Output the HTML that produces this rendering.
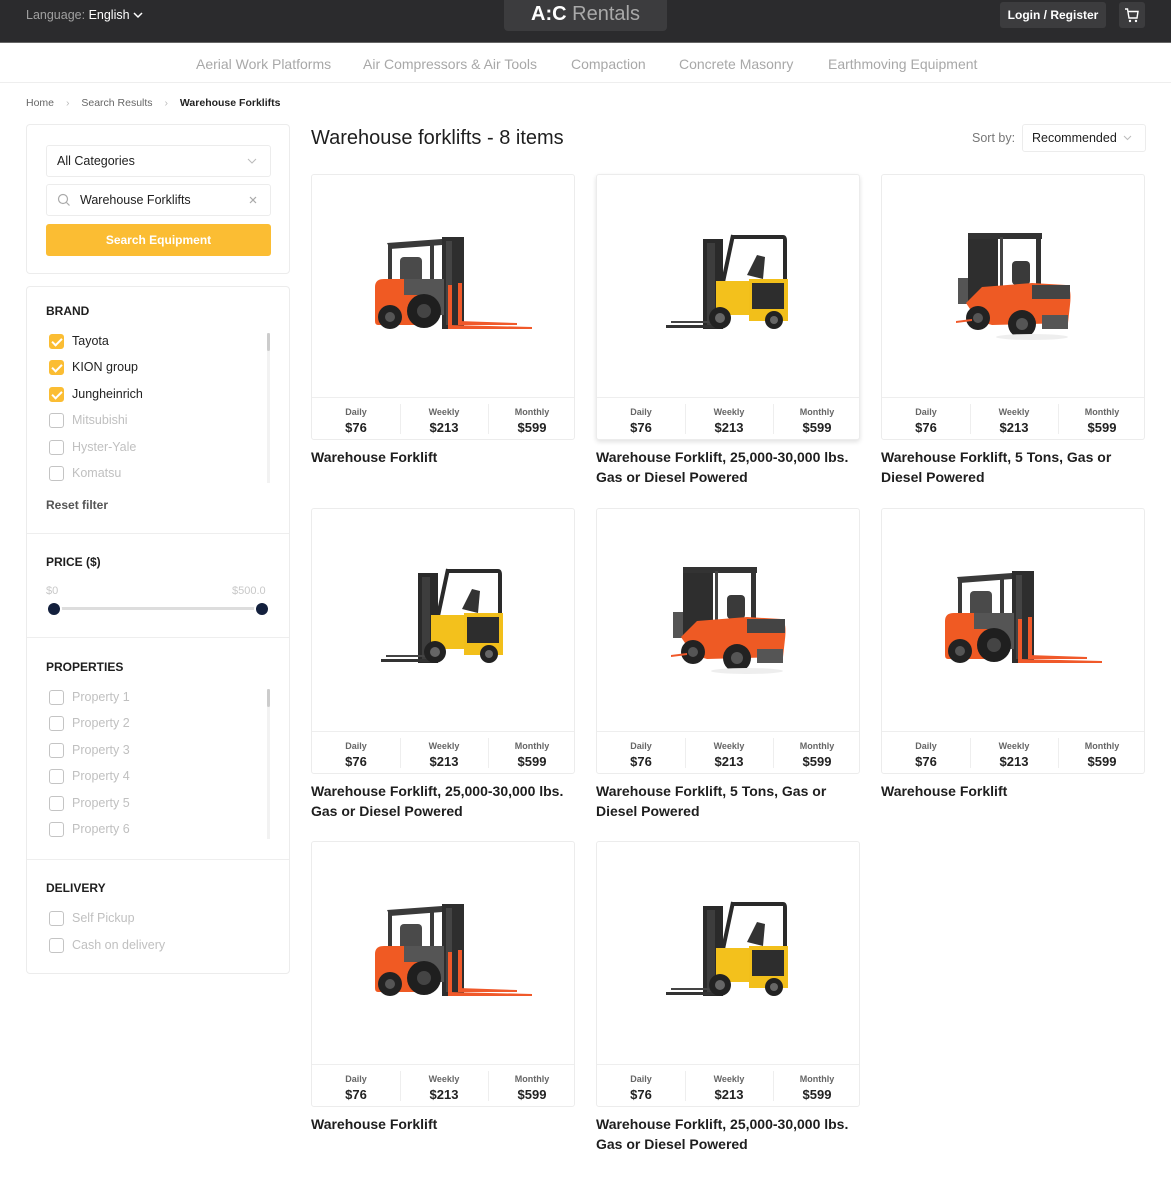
<!DOCTYPE html>
<html><head><meta charset="utf-8">
<style>
*{box-sizing:border-box;margin:0;padding:0}
body{width:1171px;height:1200px;background:#fff;font-family:"Liberation Sans",Arial,sans-serif;color:#1e1e1e;position:relative;overflow:hidden}
.abs{position:absolute}
.hdr{left:0;top:0;width:1171px;height:43px;background:#2b2b2d;border-bottom:1px solid #666}
.nav{top:44px;left:0;width:1171px;height:39px;border-bottom:1px solid #eee}
.nav span{position:absolute;top:12px;font-size:14px;color:#a8a8a8}
.panel{position:absolute;left:26px;width:264px;border:1px solid #ececec;border-radius:4px;background:#fff}
.h{position:absolute;left:19px;font-size:12px;font-weight:bold;color:#1e1e1e}
.cb{position:absolute;left:22px;width:15px;height:15px;border:1.5px solid #c4c4c4;border-radius:3px}
.cb.on{background:#fbbd33;border-color:#fbbd33}
.cb.on:after{content:"";position:absolute;left:4px;top:1px;width:4px;height:8px;border:solid #fff;border-width:0 2px 2px 0;transform:rotate(45deg)}
.lb{position:absolute;left:45px;font-size:12.5px;color:#c0c0c0}
.lb.on{color:#222}
.card{position:absolute;width:264px;height:266px;border:1px solid #ececec;border-radius:3px;background:#fff}
.pr{position:absolute;left:0;top:222px;width:262px;height:43px;border-top:1px solid #eee}
.pr .c{position:absolute;top:0;width:88px;height:43px;text-align:center}
.pr .l{position:absolute;left:0;top:9px;width:100%;font-size:9px;font-weight:bold;color:#666}
.pr .v{position:absolute;left:0;top:22px;width:100%;font-size:13px;font-weight:bold;color:#222}
.pr .sep{position:absolute;top:6px;width:1px;height:30px;background:#eee}
.t{position:absolute;font-size:14px;font-weight:bold;color:#1e1e1e;line-height:20px;width:264px}
</style></head><body>
<svg width="0" height="0" style="position:absolute">
<defs>
<g id="fa">
 <rect x="130" y="62" width="22" height="92" fill="#2e2e2e"/>
 <rect x="134" y="66" width="6" height="84" fill="#444"/>
 <path d="M75 68 L130 64 L130 70 L78 74 Z" fill="#3a3a3a"/>
 <rect x="76" y="70" width="4" height="40" fill="#3a3a3a"/>
 <rect x="118" y="68" width="4" height="40" fill="#3a3a3a"/>
 <rect x="88" y="82" width="22" height="26" rx="4" fill="#4a4a4a"/>
 <rect x="80" y="104" width="52" height="36" fill="#555"/>
 <path d="M63 112 Q63 104 72 104 L92 104 L92 150 L66 150 Q63 150 63 146 Z" fill="#f05a23"/>
 <path d="M90 120 L118 120 L118 150 L90 150 Z" fill="#ee5a24"/>
 <circle cx="78" cy="142" r="12" fill="#222"/><circle cx="78" cy="142" r="5" fill="#555"/>
 <circle cx="112" cy="136" r="17" fill="#1f1f1f"/><circle cx="112" cy="136" r="7" fill="#444"/>
 <rect x="136" y="110" width="4" height="44" fill="#f0592a"/>
 <rect x="146" y="108" width="4" height="40" fill="#f0592a"/>
 <path d="M136 150 L220 152 L220 154 L136 154 Z" fill="#f0592a"/>
 <path d="M146 146 L205 148 L205 150 L146 150 Z" fill="#f0592a"/>
</g>
<g id="fb">
 <rect x="106" y="64" width="20" height="90" fill="#2a2a2a"/>
 <rect x="110" y="68" width="8" height="82" fill="#3d3d3d"/>
 <path d="M69 150 L118 150 L118 153 L69 153 Z" fill="#333"/>
 <path d="M74 146 L118 146 L118 148 L74 148 Z" fill="#444"/>
 <path d="M134 60 L186 60 Q190 60 190 66 L190 108 L186 108 L186 64 L136 64 Z" fill="#2a2a2a"/>
 <rect x="134" y="60" width="4" height="50" fill="#2a2a2a" transform="rotate(12 136 60)"/>
 <path d="M150 100 L160 80 L168 82 L166 104 Z" fill="#333"/>
 <path d="M119 106 L154 106 L154 140 L119 140 Z" fill="#f3c11c"/>
 <path d="M152 104 L191 104 L191 146 L152 146 Z" fill="#f2bf1a"/>
 <rect x="155" y="108" width="32" height="26" fill="#2d2d2d"/>
 <circle cx="123" cy="143" r="11" fill="#222"/><circle cx="123" cy="143" r="5" fill="#666"/>
 <circle cx="177" cy="145" r="9" fill="#222"/><circle cx="177" cy="145" r="4" fill="#666"/>
</g>
<g id="fc">
 <rect x="86" y="60" width="30" height="70" fill="#2e2e2e"/>
 <path d="M86 58 L160 58 L160 64 L86 64 Z" fill="#333"/>
 <rect x="154" y="60" width="5" height="52" fill="#333"/>
 <rect x="118" y="62" width="3" height="50" fill="#444"/>
 <rect x="130" y="86" width="18" height="24" rx="4" fill="#3a3a3a"/>
 <rect x="76" y="103" width="10" height="26" fill="#555"/>
 <path d="M84 128 L100 112 L150 108 L184 110 Q190 112 188 130 L186 148 L110 150 L96 146 Z" fill="#ee5a24"/>
 <rect x="150" y="110" width="38" height="14" fill="#444"/>
 <rect x="160" y="140" width="26" height="14" fill="#555"/>
 <circle cx="96" cy="143" r="12" fill="#222"/><circle cx="96" cy="143" r="5" fill="#555"/>
 <circle cx="140" cy="149" r="14" fill="#222"/><circle cx="140" cy="149" r="6" fill="#555"/>
 <ellipse cx="150" cy="162" rx="36" ry="3" fill="#eee"/>
 <path d="M74 146 L90 144 L90 146 L74 148 Z" fill="#f0592a"/>
</g>
</defs></svg>

<div class="abs hdr">
 <div class="abs" style="left:26px;top:8px;font-size:12.5px;color:#a0a0a0">Language: <span style="color:#fff">English</span></div>
 <svg class="abs" style="left:133px;top:11px" width="10" height="8"><path d="M1 2 L5 6 L9 2" stroke="#fff" stroke-width="1.5" fill="none"/></svg>
 <div class="abs" style="left:504px;top:0;width:163px;height:31px;background:#3c3c3e;border-radius:0 0 4px 4px;text-align:center;font-size:20px;line-height:29px;color:#a9a9a9"><b style="color:#fff">A:C</b> Rentals</div>
 <div class="abs" style="left:1000px;top:2px;width:106px;height:26px;background:#3c3c3e;border-radius:3px;color:#fff;font-size:12px;font-weight:bold;text-align:center;line-height:26px">Login / Register</div>
 <div class="abs" style="left:1119px;top:2px;width:26px;height:26px;background:#3c3c3e;border-radius:3px"></div>
 <svg class="abs" style="left:1124px;top:7px" width="16" height="16"><path d="M1 2 L3.5 2 L5 11 L13 11 L14 4.5 L4 4.5" stroke="#fff" stroke-width="1.4" fill="none"/><circle cx="6" cy="14" r="1.2" fill="#fff"/><circle cx="12" cy="14" r="1.2" fill="#fff"/></svg>
</div>
<div class="abs nav">
 <span style="left:196px">Aerial Work Platforms</span><span style="left:363px">Air Compressors &amp; Air Tools</span><span style="left:571px">Compaction</span><span style="left:679px">Concrete Masonry</span><span style="left:828px">Earthmoving Equipment</span>
</div>
<div class="abs" style="left:26px;top:97px;font-size:10.5px;color:#666">Home <span style="color:#bbb;margin:0 9px">›</span> Search Results <span style="color:#bbb;margin:0 9px">›</span> <b style="color:#222">Warehouse Forklifts</b></div>

<div class="panel" style="top:124px;height:150px">
 <div class="abs" style="left:19px;top:20px;width:225px;height:32px;border:1px solid #ececec;border-radius:3px;font-size:12.5px;line-height:30px;padding-left:10px">All Categories</div>
 <svg class="abs" style="left:220px;top:33px" width="10" height="6"><path d="M1 1 L5 5 L9 1" stroke="#bbb" fill="none"/></svg>
 <div class="abs" style="left:19px;top:59px;width:225px;height:32px;border:1px solid #ececec;border-radius:3px;font-size:12.5px;line-height:30px;padding-left:33px">Warehouse Forklifts</div>
 <svg class="abs" style="left:30px;top:68px" width="14" height="14"><circle cx="6" cy="6" r="4.5" stroke="#aaa" fill="none" stroke-width="1.2"/><path d="M9.5 9.5 L12.5 12.5" stroke="#aaa" stroke-width="1.2"/></svg>
 <svg class="abs" style="left:222px;top:71px" width="8" height="8"><path d="M1 1 L7 7 M7 1 L1 7" stroke="#aaa" stroke-width="1.2"/></svg>
 <div class="abs" style="left:19px;top:99px;width:225px;height:32px;background:#fbbd33;border-radius:3px;color:#fff;font-size:12px;font-weight:bold;text-align:center;line-height:32px">Search Equipment</div>
</div>

<div class="panel" style="top:286px;height:688px">
 <div class="h" style="top:17px">BRAND</div>
 <div class="abs" style="left:240px;top:46px;width:3px;height:150px;background:#f2f2f2"><div style="height:18px;background:#ccc;border-radius:2px"></div></div>
 <div class="cb on" style="top:47px"></div><div class="lb on" style="top:47px">Tayota</div>
 <div class="cb on" style="top:73px"></div><div class="lb on" style="top:73px">KION group</div>
 <div class="cb on" style="top:100px"></div><div class="lb on" style="top:100px">Jungheinrich</div>
 <div class="cb" style="top:126px"></div><div class="lb" style="top:126px">Mitsubishi</div>
 <div class="cb" style="top:153px"></div><div class="lb" style="top:153px">Hyster-Yale</div>
 <div class="cb" style="top:179px"></div><div class="lb" style="top:179px">Komatsu</div>
 <div class="abs" style="left:19px;top:211px;font-size:12px;font-weight:bold;color:#555">Reset filter</div>
 <div class="abs" style="left:0;top:246px;width:262px;height:1px;background:#eee"></div>
 <div class="h" style="top:268px">PRICE ($)</div>
 <div class="abs" style="left:19px;top:298px;font-size:11px;color:#c8c8c8">$0</div>
 <div class="abs" style="left:205px;top:298px;font-size:11px;color:#c8c8c8">$500.0</div>
 <div class="abs" style="left:28px;top:320px;width:208px;height:3px;background:#ddd"></div>
 <div class="abs" style="left:21px;top:316px;width:12px;height:12px;border-radius:50%;background:#13203d;box-shadow:0 0 0 2px #fff"></div>
 <div class="abs" style="left:229px;top:316px;width:12px;height:12px;border-radius:50%;background:#13203d;box-shadow:0 0 0 2px #fff"></div>
 <div class="abs" style="left:0;top:350px;width:262px;height:1px;background:#eee"></div>
 <div class="h" style="top:373px">PROPERTIES</div>
 <div class="abs" style="left:240px;top:402px;width:3px;height:150px;background:#f2f2f2"><div style="height:18px;background:#ccc;border-radius:2px"></div></div>
 <div class="cb" style="top:403px"></div><div class="lb" style="top:403px">Property 1</div>
 <div class="cb" style="top:429px"></div><div class="lb" style="top:429px">Property 2</div>
 <div class="cb" style="top:456px"></div><div class="lb" style="top:456px">Property 3</div>
 <div class="cb" style="top:482px"></div><div class="lb" style="top:482px">Property 4</div>
 <div class="cb" style="top:509px"></div><div class="lb" style="top:509px">Property 5</div>
 <div class="cb" style="top:535px"></div><div class="lb" style="top:535px">Property 6</div>
 <div class="abs" style="left:0;top:572px;width:262px;height:1px;background:#eee"></div>
 <div class="h" style="top:594px">DELIVERY</div>
 <div class="cb" style="top:624px"></div><div class="lb" style="top:624px">Self Pickup</div>
 <div class="cb" style="top:651px"></div><div class="lb" style="top:651px">Cash on delivery</div>
</div>

<div class="abs" style="left:311px;top:127px;font-size:20px;color:#1e1e1e">Warehouse forklifts - 8 items</div>
<div class="abs" style="left:972px;top:131px;font-size:12.5px;color:#777">Sort by:</div>
<div class="abs" style="left:1022px;top:124px;width:124px;height:28px;border:1px solid #ececec;border-radius:3px;font-size:12.5px;line-height:26px;padding-left:9px">Recommended</div>
<svg class="abs" style="left:1123px;top:135px" width="9" height="6"><path d="M1 1 L4.5 4.5 L8 1" stroke="#bbb" fill="none"/></svg>

<div id="cards"></div>
<script>
var pos=[[311,174,'fa','Warehouse Forklift'],[596,174,'fb','Warehouse Forklift, 25,000-30,000 lbs. Gas or Diesel Powered'],[881,174,'fc','Warehouse Forklift, 5 Tons, Gas or Diesel Powered'],
[311,508,'fb','Warehouse Forklift, 25,000-30,000 lbs. Gas or Diesel Powered'],[596,508,'fc','Warehouse Forklift, 5 Tons, Gas or Diesel Powered'],[881,508,'fa','Warehouse Forklift'],
[311,841,'fa','Warehouse Forklift'],[596,841,'fb','Warehouse Forklift, 25,000-30,000 lbs. Gas or Diesel Powered']];
var h='';
pos.forEach(function(p,i){
 var sh=i==1?'box-shadow:0 2px 5px rgba(0,0,0,.12);':'';
 h+='<div class="card" style="left:'+p[0]+'px;top:'+p[1]+'px;'+sh+'"><svg class="abs" style="left:0;top:0" width="262" height="222"><use href="#'+p[2]+'"/></svg>'+
 '<div class="pr"><div class="c" style="left:0"><span class="l">Daily</span><span class="v">$76</span></div><div class="sep" style="left:88px"></div><div class="c" style="left:88px"><span class="l">Weekly</span><span class="v">$213</span></div><div class="sep" style="left:176px"></div><div class="c" style="left:176px"><span class="l">Monthly</span><span class="v">$599</span></div></div></div>'+
 '<div class="t" style="left:'+p[0]+'px;top:'+(p[1]+273)+'px">'+p[3]+'</div>';
});
document.getElementById('cards').innerHTML=h;
</script>
</body></html>
